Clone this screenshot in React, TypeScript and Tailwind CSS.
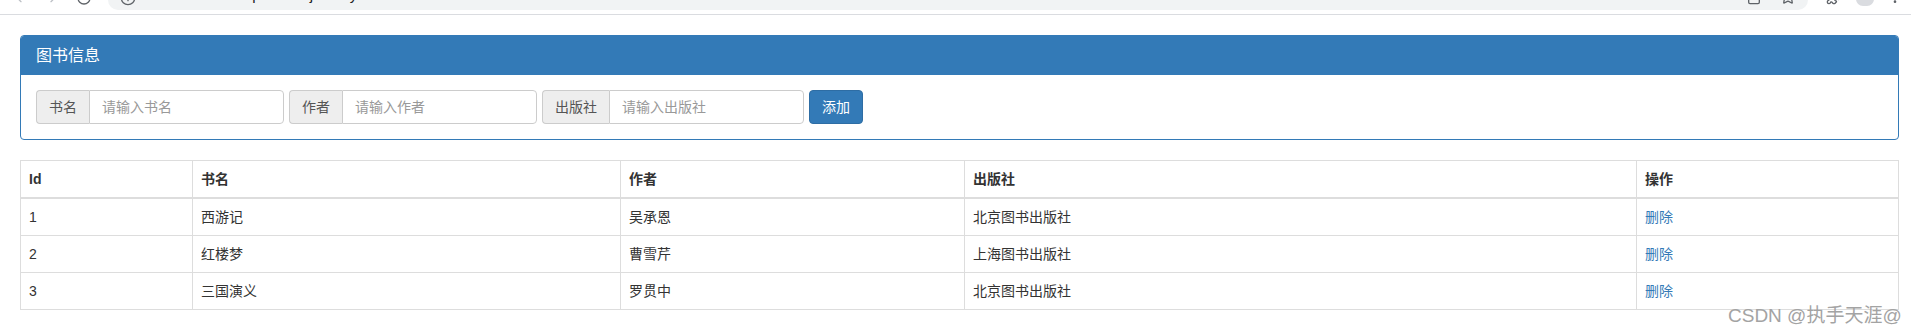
import React, { useState } from "react";
import { ArrowLeft, ArrowRight, RotateCw, Info, Star, Puzzle, MoreVertical, Share } from "lucide-react";

type Book = { id: number; name: string; author: string; publisher: string };

const initialBooks: Book[] = [
  { id: 1, name: "西游记", author: "吴承恩", publisher: "北京图书出版社" },
  { id: 2, name: "红楼梦", author: "曹雪芹", publisher: "上海图书出版社" },
  { id: 3, name: "三国演义", author: "罗贯中", publisher: "北京图书出版社" },
];

const font = "font-['Liberation_Sans','Noto_Sans_CJK_SC',sans-serif]";

// the bottom edge of the browser toolbar, cut off at the top of the shot
const BrowserStrip = () => (
  <div className="flex h-[15px] items-start overflow-hidden border-b border-[#dadce0] bg-white">
    <div className="flex w-[108px] shrink-0 items-start">
      <ArrowLeft size={16} className="ml-[13px] -mt-[11px] text-[#bdc1c6]" />
      <ArrowRight size={16} className="ml-[14px] -mt-[11px] text-[#bdc1c6]" />
      <RotateCw size={16} className="ml-[17px] -mt-[10px] text-[#5f6368]" />
    </div>
    <div className="flex h-[10px] flex-1 items-start overflow-hidden rounded-b-[14px] bg-[#f1f3f4]">
      <Info size={16} className="ml-[12px] -mt-[10px] shrink-0 text-[#5f6368]" />
      <span className="ml-[12px] -mt-[13px] whitespace-nowrap text-[15px] leading-[16px] text-[#202124]">
        127.0.0.1:5500/partise/ajax/day04/book/index.html
      </span>
      <div className="ml-auto flex items-start">
        <Share size={16} className="-mt-[11px] text-[#5f6368]" />
        <Star size={16} className="ml-[18px] -mt-[11px] mr-[12px] text-[#5f6368]" />
      </div>
    </div>
    <div className="flex w-[103px] shrink-0 items-start">
      <Puzzle size={16} className="ml-[18px] -mt-[11px] text-[#5f6368]" />
      <div className="ml-[14px] -mt-[8px] h-[14px] w-[18px] rounded-full bg-[#dadce0]" />
      <MoreVertical size={16} className="ml-[13px] -mt-[11px] text-[#5f6368]" />
    </div>
  </div>
);

const InputGroup = ({ label, placeholder, value, onChange }: { label: string; placeholder: string; value: string; onChange: (v: string) => void }) => (
  <div className="flex h-[34px]">
    <span className="flex items-center rounded-l-[4px] border border-r-0 border-[#ccc] bg-[#eee] px-[12px] text-[14px] text-[#555]">
      {label}
    </span>
    <input
      value={value}
      onChange={(e) => onChange(e.target.value)}
      placeholder={placeholder}
      className="w-[195px] rounded-r-[4px] border border-[#ccc] px-[12px] text-[14px] text-[#555] outline-none placeholder:text-[#999]"
    />
  </div>
);

const App = () => {
  const [books, setBooks] = useState<Book[]>(initialBooks);
  const [name, setName] = useState("");
  const [author, setAuthor] = useState("");
  const [publisher, setPublisher] = useState("");

  const addBook = () => {
    if (!name || !author || !publisher) return;
    const nextId = books.length ? Math.max(...books.map((b) => b.id)) + 1 : 1;
    setBooks([...books, { id: nextId, name, author, publisher }]);
    setName("");
    setAuthor("");
    setPublisher("");
  };

  return (
    <div className={`relative min-h-[335px] bg-white text-[14px] text-[#333] ${font}`}>
      <BrowserStrip />

      <div className="pl-[20px] pr-[12px] pt-[20px]">
        {/* panel */}
        <div className="overflow-hidden rounded-[4px] border border-[#337ab7]">
          <div className="flex h-[39px] items-center bg-[#337ab7] px-[15px] text-[16px] text-white">
            图书信息
          </div>
          <div className="flex gap-[5px] p-[15px]">
            <InputGroup label="书名" placeholder="请输入书名" value={name} onChange={setName} />
            <InputGroup label="作者" placeholder="请输入作者" value={author} onChange={setAuthor} />
            <InputGroup label="出版社" placeholder="请输入出版社" value={publisher} onChange={setPublisher} />
            <button
              onClick={addBook}
              className="h-[34px] rounded-[4px] border border-[#2e6da4] bg-[#337ab7] px-[12px] text-[14px] text-white"
            >
              添加
            </button>
          </div>
        </div>

        {/* table */}
        <table className="mt-[20px] w-full border-collapse border border-[#ddd] text-left">
          <thead>
            <tr className="border-b-2 border-[#ddd]">
              <th className="w-[172px] border border-[#ddd] p-[8px] leading-[20px] font-bold">Id</th>
              <th className="w-[428px] border border-[#ddd] p-[8px] leading-[20px] font-bold">书名</th>
              <th className="w-[344px] border border-[#ddd] p-[8px] leading-[20px] font-bold">作者</th>
              <th className="w-[672px] border border-[#ddd] p-[8px] leading-[20px] font-bold">出版社</th>
              <th className="border border-[#ddd] p-[8px] leading-[20px] font-bold">操作</th>
            </tr>
          </thead>
          <tbody>
            {books.map((book) => (
              <tr key={book.id}>
                <td className="border border-[#ddd] p-[8px] leading-[20px]">{book.id}</td>
                <td className="border border-[#ddd] p-[8px] leading-[20px]">{book.name}</td>
                <td className="border border-[#ddd] p-[8px] leading-[20px]">{book.author}</td>
                <td className="border border-[#ddd] p-[8px] leading-[20px]">{book.publisher}</td>
                <td className="border border-[#ddd] p-[8px] leading-[20px]">
                  <a
                    href="#"
                    onClick={(e) => {
                      e.preventDefault();
                      setBooks(books.filter((b) => b.id !== book.id));
                    }}
                    className="text-[#337ab7]"
                  >
                    删除
                  </a>
                </td>
              </tr>
            ))}
          </tbody>
        </table>
      </div>

      {/* watermark */}
      <div className="absolute left-[1728px] top-[305px] whitespace-nowrap text-[19px] leading-[22px] text-[#a3a3a3]">
        CSDN @执手天涯@
      </div>
    </div>
  );
};

export default App;
